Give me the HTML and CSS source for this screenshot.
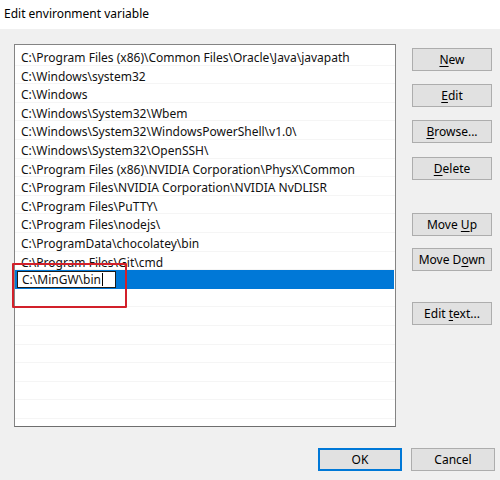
FILE: index.html
```html
<!DOCTYPE html>
<html>
<head>
<meta charset="utf-8">
<title>Edit environment variable</title>
<link rel="stylesheet" href="styles.css">
</head>
<body>
<div class="dialog">
  <div class="titlebar">Edit environment variable</div>
  <div class="content">
    <div class="listwrap">
      <div class="list">
        <div class="row">C:\Program Files (x86)\Common Files\Oracle\Java\javapath</div>
        <div class="row">C:\Windows\system32</div>
        <div class="row">C:\Windows</div>
        <div class="row">C:\Windows\System32\Wbem</div>
        <div class="row">C:\Windows\System32\WindowsPowerShell\v1.0\</div>
        <div class="row">C:\Windows\System32\OpenSSH\</div>
        <div class="row">C:\Program Files (x86)\NVIDIA Corporation\PhysX\Common</div>
        <div class="row">C:\Program Files\NVIDIA Corporation\NVIDIA NvDLISR</div>
        <div class="row">C:\Program Files\PuTTY\</div>
        <div class="row">C:\Program Files\nodejs\</div>
        <div class="row">C:\ProgramData\chocolatey\bin</div>
        <div class="row">C:\Program Files\Git\cmd</div>
        <div class="row selected">
          <div class="editbox">C:\MinGW\bin<span class="caret"></span></div>
        </div>
      </div>
      <div class="highlight"></div>
    </div>
    <div class="buttons">
      <button class="btn b-new"><u>N</u>ew</button>
      <button class="btn b-edit"><u>E</u>dit</button>
      <button class="btn b-browse"><u>B</u>rowse...</button>
      <button class="btn b-delete"><u>D</u>elete</button>
      <button class="btn b-up">Move <u>U</u>p</button>
      <button class="btn b-down">Move D<u>o</u>wn</button>
      <button class="btn b-text">Edit <u>t</u>ext...</button>
    </div>
  </div>
  <div class="footer">
    <button class="btn wide default">OK</button>
    <button class="btn wide">Cancel</button>
  </div>
</div>
</body>
</html>
```
FILE: styles.css
```css
html, body {
  margin: 0;
  padding: 0;
  background: #f0f0f0;
}

.dialog {
  width: 500px;
  height: 480px;
  background: #f0f0f0;
  font-family: "Noto Sans", "Open Sans", sans-serif;
  font-size: 12px;
  color: #000;
  overflow: hidden;
}

.titlebar {
  height: 29px;
  background: #fff;
  padding-left: 4px;
  line-height: 28px;
  font-size: 12px;
  color: #000;
}

.content {
  display: flex;
  padding: 15px 0 0 14px;
}

.listwrap {
  position: relative;
}

/* list view with faint gridlines continuing below the last item */
.list {
  box-sizing: border-box;
  width: 382px;
  height: 383px;
  background-color: #fff;
  background-image: repeating-linear-gradient(to bottom,
    transparent 0, transparent 17.6px, #f5f5f5 17.6px, #f5f5f5 18.6px);
  background-position: 0 2px;
  border: 1px solid #848484;
  border-bottom-color: #6e6e6e;
  padding: 2px 1px 0 0;
  overflow: hidden;
}

.row {
  height: 18.6px;
  line-height: 21px;
  padding-left: 6px;
  white-space: nowrap;
  color: #111;
}

.row.selected {
  background: #0078d7;
  position: relative;
}

.editbox {
  position: absolute;
  left: 2px;
  top: 1px;
  width: 93px;
  height: 15px;
  background: #fff;
  border: 1px solid #1c1c1c;
  padding-left: 4px;
  line-height: 16px;
  box-sizing: content-box;
}

.caret {
  display: inline-block;
  width: 1px;
  height: 13px;
  background: #000;
  vertical-align: -2px;
  margin-left: 1px;
}

.highlight {
  position: absolute;
  left: -2px;
  top: 219px;
  width: 111px;
  height: 41px;
  border: 2px solid #d2202a;
  border-radius: 1px;
}

.buttons {
  display: flex;
  flex-direction: column;
  margin-left: 16px;
  padding-top: 4px;
}

.btn {
  box-sizing: border-box;
  width: 80px;
  height: 23px;
  padding: 0;
  background: #e1e1e1;
  border: 1px solid #adadad;
  border-radius: 0;
  font-family: "Noto Sans", "Open Sans", sans-serif;
  font-size: 12px;
  color: #000;
  line-height: 20px;
  text-align: center;
}

.btn u {
  text-underline-offset: 2px;
}

.b-edit, .b-browse { margin-top: 13px; }
.b-delete { margin-top: 14px; }
.b-up { margin-top: 33px; }
.b-down { margin-top: 12px; }
.b-text { margin-top: 31px; }

.footer {
  display: flex;
  justify-content: flex-end;
  gap: 9px;
  padding: 21px 5px 0 0;
}

.btn.wide {
  width: 84px;
}

.btn.default {
  border: 2px solid #0078d7;
  line-height: 18px;
}
```
